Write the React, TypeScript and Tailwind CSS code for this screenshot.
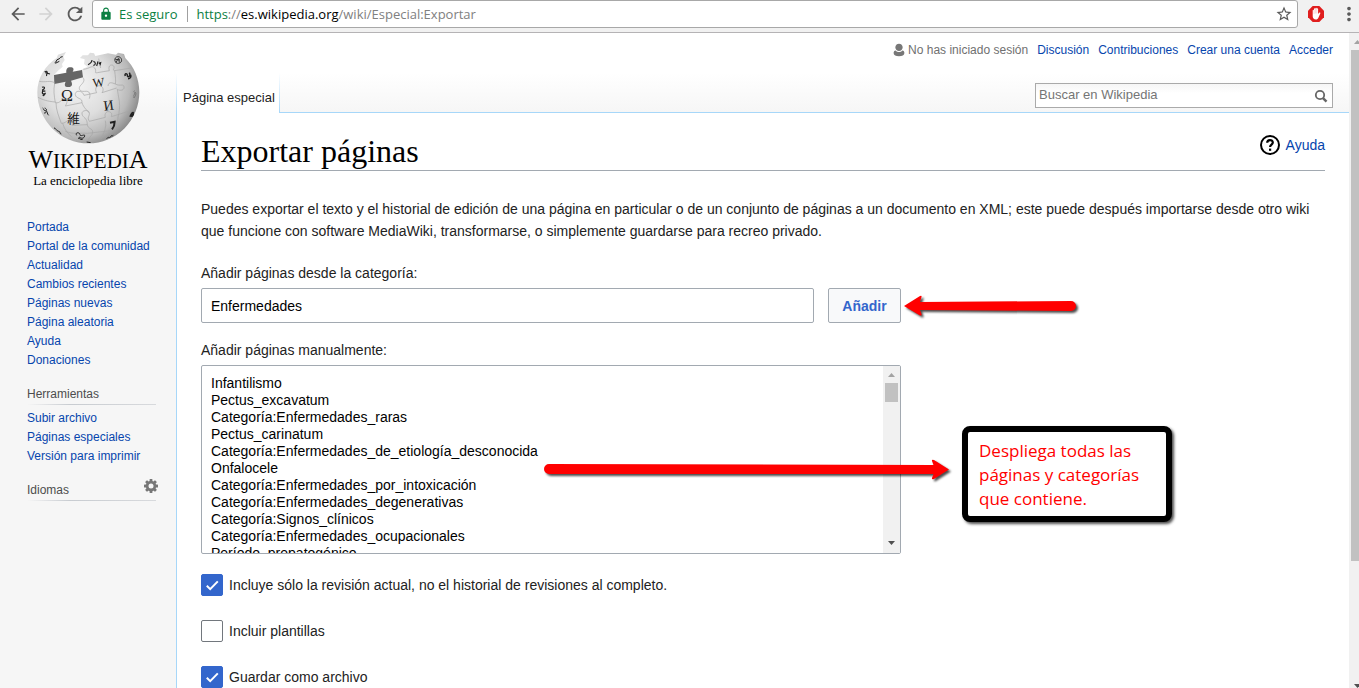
import React from 'react';
import { MdArrowBack, MdArrowForward, MdLock, MdMoreVert, MdRefresh, MdStarBorder } from 'react-icons/md';

const mainLinks = [
  'Portada',
  'Portal de la comunidad',
  'Actualidad',
  'Cambios recientes',
  'Páginas nuevas',
  'Página aleatoria',
  'Ayuda',
  'Donaciones',
];

const toolLinks = ['Subir archivo', 'Páginas especiales', 'Versión para imprimir'];

const accountLinks = ['Discusión', 'Contribuciones', 'Crear una cuenta', 'Acceder'];

const pages = [
  'Infantilismo',
  'Pectus_excavatum',
  'Categoría:Enfermedades_raras',
  'Pectus_carinatum',
  'Categoría:Enfermedades_de_etiología_desconocida',
  'Onfalocele',
  'Categoría:Enfermedades_por_intoxicación',
  'Categoría:Enfermedades_degenerativas',
  'Categoría:Signos_clínicos',
  'Categoría:Enfermedades_ocupacionales',
  'Período_prepatogénico',
].join('\n');

const options = [
  { id: 'current', label: 'Incluye sólo la revisión actual, no el historial de revisiones al completo.', on: true },
  { id: 'templates', label: 'Incluir plantillas', on: false },
  { id: 'file', label: 'Guardar como archivo', on: true },
];

function BrowserBar() {
  return (
    <header className="flex h-[33px] shrink-0 items-start border-b border-[#b5b3b5] bg-[#f1f1f1] font-['Open_Sans','Noto_Sans',sans-serif] text-[13px]">
      <div className="flex h-7 w-[92px] items-center gap-2 pl-2 text-[#5a5a5a]">
        <button type="button" aria-label="Atrás"><MdArrowBack className="size-5" /></button>
        <button type="button" aria-label="Adelante" className="text-[#d2d2d2]"><MdArrowForward className="size-5" /></button>
        <button type="button" aria-label="Recargar"><MdRefresh className="size-[22px]" /></button>
      </div>
      <div className="flex h-7 flex-1 items-center rounded-[3px] border border-[#a8a8a8] bg-white pr-1 pl-1.5">
        <MdLock className="size-3.5 text-[#0b8043]" />
        <span className="ml-1.5 text-[#0b8043]">Es seguro</span>
        <span className="mr-2 ml-2.5 h-4 w-px bg-[#a0a0a0]" />
        <span className="flex-1 text-[#808080]">
          <span className="text-[#0b8043]">https</span>://<span className="text-black">es.wikipedia.org</span>/wiki/Especial:Exportar
        </span>
        <button type="button" aria-label="Añadir a marcadores"><MdStarBorder className="size-[18px] text-[#5a5a5a]" /></button>
      </div>
      <div className="flex h-7 w-[61px] items-center gap-[14px] pl-[10px]">
        <button type="button" aria-label="Bloqueador">
          <svg viewBox="0 0 16 16" className="size-4">
            <path d="M4.7 0h6.6L16 4.7v6.6L11.3 16H4.7L0 11.3V4.7z" fill="#e01e1e" />
            <path d="M4.7 9V4.4c0-1 1.3-1 1.3 0V3c0-1 1.4-1 1.4 0v-.5c0-1 1.4-1 1.4 0V3c0-.9 1.3-.9 1.3 0v5l1-1.2c.7-.7 1.5-.1 1.2.6l-1.9 4.3c-.5 1.2-1.2 1.8-2.6 1.8-2 0-3.1-1.300-3.100-3.200z" fill="#fff" />
            <path d="M6 4v4M7.400 3v4.500M8.800 3v4.500" stroke="#f2a0a0" strokeWidth=".4" />
          </svg>
        </button>
        <button type="button" aria-label="Menú"><MdMoreVert className="size-[22px] text-[#5a5a5a]" /></button>
      </div>
    </header>
  );
}

function Globe() {
  return (
    <svg viewBox="0 0 360 306" className="ml-[3px] h-[102px] w-[120px]" aria-hidden="true">
      <defs>
        <radialGradient id="ball" gradientUnits="userSpaceOnUse" cx="140" cy="120" r="200">
          <stop offset="0" stopColor="#f4f4f4" />
          <stop offset=".5" stopColor="#dedede" />
          <stop offset=".8" stopColor="#b9b9b9" />
          <stop offset="1" stopColor="#858585" />
        </radialGradient>
        <clipPath id="disc">
          <circle cx="175" cy="145" r="153" />
        </clipPath>
      </defs>
      <path
        d="M22 145C22 102 46 64 80 42L84 32 108 24 100 38 104 48 96 60 98 68 84 80 72 93 80 112 158 92 152 78 172 68 162 60 164 46 150 42 158 34 174 34 180 26 192 28 196 36 234 28 258 32 264 26 282 30 286 42C312 68 328 104 328 145A153 153 0 0 1 175 298A153 153 0 0 1 22 145Z"
        fill="url(#ball)"
      />
      <path d="M72 93l37-7c-1-10 2-16 12-16s12 6 7 13l28-5 3 22-36 10c6 12 3 18-7 19s-15-4-9-16l-34 7z" fill="#666" />
      <g fill="none" stroke="#a6a6a6" strokeWidth="2" clipPath="url(#disc)">
        <path d="M28 112c20 4 30-4 46 4M74 118c-4 22-2 34 2 58 14 4 20-14 30-10s2 16 0 20l50-10c2-16-18-10-20-24s22-14 26 2l38-8c-8-14 2-24 12-20s8 16 4 20l44-14" />
        <path d="M158 100c8 8 2 16-6 24s-4 20 12 18 18 8 14 22M160 76c20-2 26-14 34-4s-4 16 8 14l36-6c-6-20 12-20 14-12s-6 10 2 12l50-8M206 44l6 28M254 80c2 18 4 28 2 40 14 8 24-2 26 8s-10 14-20 8l6 36M256 120c-10-4-20-8-22 6" />
        <path d="M24 160c16 8 28 12 52 14M78 176c0 22 8 40 16 62 18 0 22-18 32-14s2 18 0 20l46-2c0-22-14-20-16-32s20-14 22-4-8 14 0 26l48-12c-4-14 6-20 14-16s4 12 4 14l52-16M156 176c6 18 16 22 20 30M268 172c2 18 0 32-4 48M98 238c6 20 14 28 28 42M172 242c2 14 16 10 16 22s-12 14-14 28M226 230c4 22-4 34-12 54M106 262c24 10 44 4 66 6l70-8M264 218c0 18-10 34-22 44" />
      </g>
      <g fill="#1a1a1a" className="font-['Liberation_Serif','Noto_Sans_CJK_JP',serif]">
        <text x="93" y="170" fontSize="48">Ω</text>
        <text x="189" y="130" fontSize="38" transform="rotate(-6 189 130)">W</text>
        <text x="223" y="200" fontSize="42" transform="rotate(-8 223 200)">И</text>
        <text x="112" y="236" fontSize="38">維</text>
      </g>
      <g fill="none" stroke="#222" strokeWidth="3.500" clipPath="url(#disc)">
        <path d="M240 236l14-3c0 8-2 16-8 23" strokeWidth="6" />
        <path d="M174 62c8-4 12-8 12-14m4 4c8 2 8 12 0 12m14-12l-4 14m6-8l6-2-2 8" />
        <path d="M264 38c-14 0-12 22 2 20s10-20-2-20zm0 6l-6 12m8-14l2 14m-12-10l14 2" strokeWidth="2.500" />
        <path d="M286 96c-4-8 6-10 6-2s12 4 6-8m-4 18c8 0 10-6 8-12" strokeWidth="4.500" />
        <path d="M44 84c4-4 8-2 8 2s-4 6-2 10m-4-10l14 4" />
        <path d="M36 130c8-4 10 4 4 6s0 8 6 4m-8 2c-4 8 8 14 8 4m-8 8c4 2 6-2 4-6" />
        <path d="M38 192c4 2 2 8 8 8s4-6-2-8m4 8c6 2 2 10 8 14m-14-8c4 4 6 0 6-4" strokeWidth="3" />
        <path d="M314 140c-8 4 6 6-2 10m4 0c-10 2 0 8-6 12m6-18c4 6 0 12-4 18" stroke="#777" strokeWidth="2.500" />
        <path d="M300 218c4-12 10-16 10-10s-10 6-6 8 6-2 6-6" strokeWidth="4.500" />
        <path d="M72 252c4-2 8 10 14 10s2 8 8 8M140 274c-6-10 10-10 10-2s16-4 14 4-10 8-14 4-2 10 8 6m-14-4l4 2" strokeWidth="3" />
        <path d="M230 284c6-8 10 0 12-6s6 0 8-4M74 56c6 0 4-10 10-10s4-8 14-8m-22 20l12-6" strokeWidth="3" />
        <path d="M170 294l12 2" strokeWidth="3" />
      </g>
    </svg>
  );
}

function NavLinks({ items }: { items: string[] }) {
  return (
    <ul>
      {items.map((t) => (
        <li key={t}><a href="#" className="text-[#0645ad]">{t}</a></li>
      ))}
    </ul>
  );
}

function NavHeading({ children }: { children: React.ReactNode }) {
  return (
    <>
      <h3 className="mt-[15px] flex justify-between text-[#4d4d4d]">{children}</h3>
      <div className="mb-1 h-px bg-linear-to-r from-transparent via-[#c8ccd1] via-33% to-[#d8dadd]" />
    </>
  );
}

function Gear() {
  return (
    <svg viewBox="0 0 14 14" className="-mt-2.5 -mr-0.5 size-3.5 text-[#777]" aria-hidden="true">
      <g fill="currentColor">
        {[0, 45, 90, 135].map((a) => (
          <rect key={a} x="5.600" y="0" width="2.800" height="14" rx=".5" transform={`rotate(${a} 7 7)`} />
        ))}
        <circle cx="7" cy="7" r="5.200" />
      </g>
      <circle cx="7" cy="7" r="2.500" fill="#f6f6f6" />
    </svg>
  );
}

function Sidebar() {
  return (
    <aside className="w-[176px] shrink-0 bg-[#f6f6f6]">
      <div className="bg-[linear-gradient(#fff_40px,#f6f6f6_80px)] bg-[length:100%_80px] bg-no-repeat pt-[11px]">
        <a href="#" className="flex h-[174px] flex-col items-center text-black font-['Liberation_Serif',serif]">
          <Globe />
          <span className="mt-0.5 text-[21px] leading-6"><span className="text-[26px]">W</span>IKIPEDI<span className="text-[26px]">A</span></span>
          <span className="text-[13px] leading-4">La enciclopedia libre</span>
        </a>
      </div>
      <nav className="pr-5 pl-[27px] text-xs leading-[19px]">
        <NavLinks items={mainLinks} />
        <NavHeading>Herramientas</NavHeading>
        <NavLinks items={toolLinks} />
        <NavHeading>
          Idiomas
          <button type="button" aria-label="Configuración de idioma"><Gear /></button>
        </NavHeading>
      </nav>
    </aside>
  );
}

function PageHeader() {
  return (
    <div className="flex h-20 items-end justify-between border-b border-[#a7d7f9] bg-[linear-gradient(#fff_40px,#f6f6f6)]">
      <div className="-mb-px flex h-10">
        <a href="#" className="flex items-center bg-white px-1 pt-2.5 pl-[6px] text-[13px] leading-4 text-[#222]">Página especial</a>
        <span className="w-px bg-linear-to-b from-white to-[#a7d7f9]" />
      </div>
      <div className="flex h-full flex-col items-end justify-between pt-2 pr-4 pb-1">
        <div className="flex items-center gap-[9px] text-xs leading-[18px]">
          <span className="flex items-center gap-[3px] text-[#707070]">
            <svg viewBox="0 0 12 14" className="h-3.5 w-3" fill="#777" aria-hidden="true">
              <path d="M6 .8a3.600 3.600 0 0 1 2.600 6.200C7.200 8.300 4.800 8.300 3.400 7A3.600 3.600 0 0 1 6 .8z" />
              <path d="M2.600 7.400c1.800 2.100 5 2.100 6.800 0 1.400.2 2 1.200 2 2.600 0 2.200-2.300 3.300-5.400 3.300S.6 12.200.6 10c0-1.400.6-2.400 2-2.600z" />
            </svg>
            No has iniciado sesión
          </span>
          {accountLinks.map((t) => (
            <a key={t} href="#" className="text-[#0645ad]">{t}</a>
          ))}
        </div>
        <form className="flex h-[25px] w-[298px] items-center border border-[#aaa] bg-linear-to-b from-[#f6f6f6] to-white to-40% pr-1">
          <input type="search" aria-label="Buscar en Wikipedia" placeholder="Buscar en Wikipedia" className="min-w-0 flex-1 px-[3px] pb-0.5 text-[13px] outline-none placeholder:text-[#757575]" />
          <button type="button" aria-label="Buscar">
            <svg viewBox="0 0 14 14" className="size-3.5" fill="none" stroke="#666" aria-hidden="true">
              <circle cx="6" cy="6" r="4.200" strokeWidth="1.800" />
              <path d="M9 9.200l3.500 3.500" strokeWidth="2.400" />
            </svg>
          </button>
        </form>
      </div>
    </div>
  );
}

function AddArrow() {
  return (
    <svg viewBox="0 0 184 36" className="absolute top-0 left-full h-9 w-[184px] drop-shadow-[2px_2px_1px_rgba(0,0,0,0.7)]" aria-hidden="true">
      <path d="M3 18L19 8q2-1 1.500 1L19 14l151-1a5 5 0 0 1 0 10L19 22l1.500 4q.5 2-1.500 1.500z" fill="#f00" />
    </svg>
  );
}

function ListArrow() {
  return (
    <svg viewBox="0 0 410 32" className="absolute top-[87px] left-[341px] h-8 w-[410px] drop-shadow-[2px_2px_1px_rgba(0,0,0,0.7)]" aria-hidden="true">
      <path d="M406 16.500L391 26q-2.500 1-2-1l1.500-4L6 21a5 5 0 0 1 0-10L390.500 12 389 8q-.5-2 2-1z" fill="#f00" />
    </svg>
  );
}

function ExportForm() {
  return (
    <form className="max-w-[700px]">
      <label htmlFor="category" className="mt-5 block">Añadir páginas desde la categoría:</label>
      <div className="relative mt-1 flex h-[35px] gap-[14px]">
        <input id="category" type="text" defaultValue="Enfermedades" className="min-w-0 flex-1 rounded-xs border border-[#a2a9b1] bg-white px-[9px] text-black" />
        <button type="button" className="w-[73px] rounded-xs border border-[#a2a9b1] bg-[#f8f9fa] font-bold text-[#36c]">Añadir</button>
        <AddArrow />
      </div>
      <label htmlFor="pages" className="mt-4 block">Añadir páginas manualmente:</label>
      <div className="relative mt-1 flex h-[189px] rounded-xs border border-[#a2a9b1]">
        <textarea id="pages" defaultValue={pages} className="h-full min-w-0 flex-1 resize-none overflow-hidden px-[9px] pt-[9px] leading-[17px] text-black outline-none" />
        <div className="flex w-[17px] flex-col items-center justify-between bg-[#f1f1f1]">
          <div className="flex flex-col items-center">
            <svg viewBox="0 0 17 17" className="size-[17px]" aria-hidden="true"><path d="M5 11h7L8.500 7z" fill="#a3a3a3" /></svg>
            <div className="h-[19px] w-[13px] bg-[#c1c1c1]" />
          </div>
          <svg viewBox="0 0 17 17" className="size-[17px]" aria-hidden="true"><path d="M5 5h7L8.500 9z" fill="#505050" /></svg>
        </div>
        <ListArrow />
        <p className="absolute top-[60px] left-[760px] w-[210px] rounded-lg border-6 border-black bg-white pt-[7px] pb-[5px] pl-[11px] font-['Open_Sans','Noto_Sans',sans-serif] text-[17px] leading-6 text-[#f00] shadow-[2px_2px_3px_rgba(0,0,0,0.7)]">
          Despliega todas las páginas y categorías que contiene.
        </p>
      </div>
      <div className="mt-5 flex flex-col gap-6">
        {options.map((o) => (
          <div key={o.id} className="flex items-center gap-1.5">
            <span className="relative size-[22px]">
              <input id={o.id} type="checkbox" defaultChecked={o.on} className="peer block size-[22px] appearance-none rounded-xs border border-[#72777d] bg-white checked:border-[#36c] checked:bg-[#36c]" />
              <svg viewBox="0 0 22 22" className="pointer-events-none absolute inset-0 hidden size-[22px] peer-checked:block" aria-hidden="true">
                <path d="M5.800 11.800l3.400 3.400 7.600-7.800" fill="none" stroke="#fff" strokeWidth="2" />
              </svg>
            </span>
            <label htmlFor={o.id}>{o.label}</label>
          </div>
        ))}
      </div>
    </form>
  );
}

function PageScrollbar() {
  return (
    <div className="w-2.5 shrink-0 overflow-hidden bg-[#f1f1f1]" aria-hidden="true">
      <div className="flex h-full w-[17px] flex-col items-center">
        <svg viewBox="0 0 17 17" className="size-[17px] shrink-0"><path d="M5 11h7L8.500 7z" fill="#a3a3a3" /></svg>
        <div className="h-[78%] w-[13px] bg-[#c1c1c1]" />
        <svg viewBox="0 0 17 17" className="mt-auto size-[17px] shrink-0"><path d="M5 13h7L8.500 17z" fill="#505050" /></svg>
      </div>
    </div>
  );
}

export default function App() {
  return (
    <div className="flex h-screen flex-col overflow-hidden bg-white font-['Liberation_Sans',Arial,sans-serif] text-sm leading-[22px] text-[#222]">
      <BrowserBar />
      <div className="flex min-h-0 flex-1">
        <Sidebar />
        <div className="w-px shrink-0 bg-[linear-gradient(#fff_40px,#a7d7f9_80px)]" />
        <div className="min-w-0 flex-1 overflow-hidden">
          <PageHeader />
          <main className="px-6 pt-5">
            <div className="flex h-[38px] items-start justify-between border-b border-[#a2a9b1]">
              <h1 className="font-[Georgia,'Liberation_Serif',serif] text-[32px] leading-9 text-black">Exportar páginas</h1>
              <a href="#" className="flex h-6 items-center gap-1 text-[#0645ad]">
                <svg viewBox="0 0 24 24" className="size-6" fill="none" stroke="#000" strokeWidth="2" aria-hidden="true">
                  <circle cx="12" cy="12" r="9" />
                  <path d="M9.200 9.800c0-3.600 5.600-3.600 5.600-.3 0 2.200-2.700 2.100-2.700 4.600" strokeWidth="2.200" />
                  <path d="M11 15.600h2.200v2.200H11z" fill="#000" stroke="none" />
                </svg>
                Ayuda
              </a>
            </div>
            <p className="mt-[27px]">
              Puedes exportar el texto y el historial de edición de una página en particular o de un conjunto de páginas a un documento en XML; este puede después importarse desde otro wiki que funcione con software MediaWiki, transformarse, o simplemente guardarse para recreo privado.
            </p>
            <ExportForm />
          </main>
        </div>
        <PageScrollbar />
      </div>
    </div>
  );
}
